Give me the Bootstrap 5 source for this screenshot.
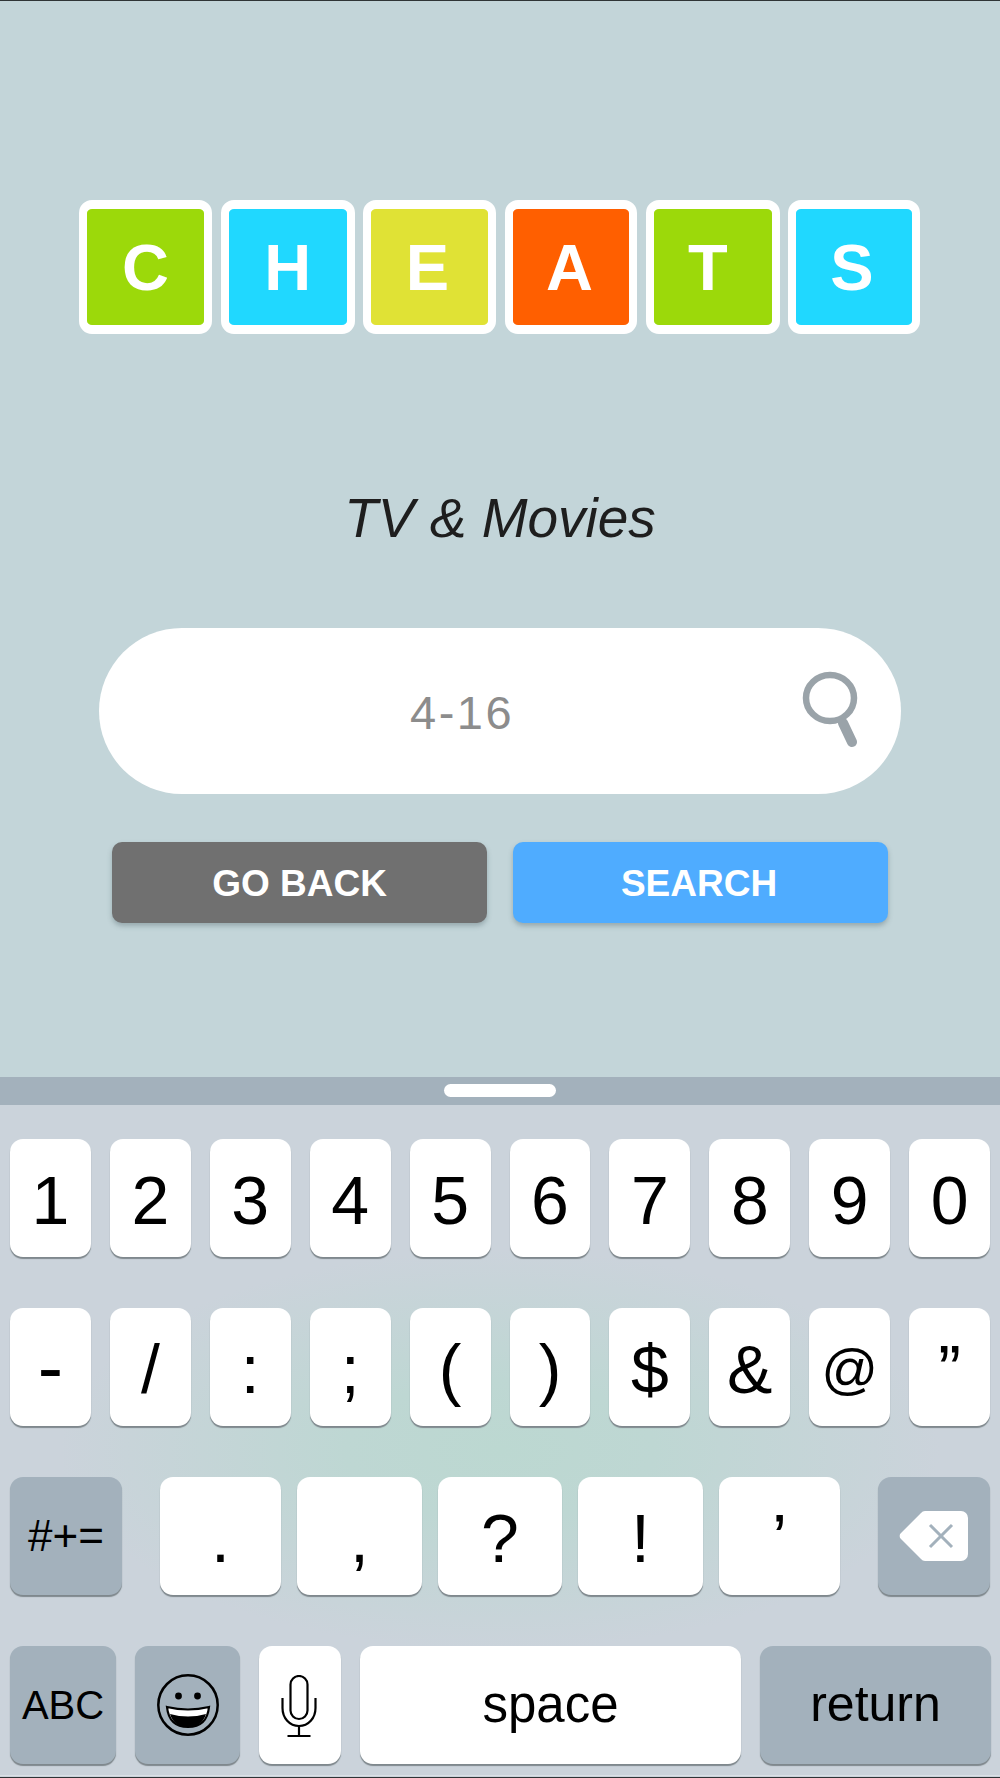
<!DOCTYPE html>
<html lang="en">
<head>
  <meta charset="UTF-8">
  <meta name="viewport" content="width=device-width, initial-scale=1.0">
  <title>Cheats</title>
  <link href="https://cdn.jsdelivr.net/npm/bootstrap@5.3.0/dist/css/bootstrap.min.css" rel="stylesheet">
  <style>
    body {
      width: 1000px;
      height: 1778px;
      overflow: hidden;
      font-family: "Liberation Sans", Arial, sans-serif;
      background: #c3d5d9;
    }
    .screen-top {
      height: 1077px;
      padding-top: 199px;
      border-top: 1px solid #2f3436;
    }
    /* logo */
    .logo-row { gap: 8.7px; padding-left: 79px; }
    .logo-tile {
      width: 133px;
      height: 134px;
      border-style: solid;
      border-color: #fff;
      border-width: 9px 8px;
      border-radius: 13px;
      color: #fff;
      font-size: 65px;
      font-weight: 700;
      line-height: 1;
    }
    .tile-wide { width: 134px; }
    .tile-thin { width: 132px; }
    .tile-green { background: #9cd90a; }
    .tile-blue { background: #20d8ff; }
    .tile-yellow { background: #e0e235; }
    .tile-orange { background: #ff5f00; }
    .nudge-3 { padding-right: 3px; }
    .nudge-5 { padding-right: 5px; }
    .nudge-10 { padding-right: 10px; }

    .cat-title {
      margin: 152px 0 0;
      height: 142px;
      color: #1e1e1e;
      font-size: 55px;
      font-style: italic;
      line-height: 65px;
    }
    /* search */
    .search-pill {
      width: 802px;
      height: 166px;
      margin-left: 99px;
      padding-left: 311px;
      padding-right: 40px;
      border-radius: 83px;
    }
    .search-text { color: #8c8c8c; font-size: 47px; letter-spacing: 2.5px; padding-top: 4px; }
    .search-pill svg { margin-top: -4px; }
    .btn-row { gap: 26px; margin-top: 48px; padding-left: 112px; }
    .act-btn {
      width: 375px;
      height: 81px;
      border: 0;
      border-radius: 10px;
      padding: 2px 0 0;
      color: #fff;
      font-size: 37px;
      font-weight: 700;
      box-shadow: 0 3px 5px rgba(70, 90, 95, .35);
    }
    .act-back, .act-back:hover { background: #707070; color: #fff; }
    .act-search, .act-search:hover { background: #4facff; color: #fff; padding-right: 3px; }

    /* keyboard */
    .kb-bar { height: 28px; padding-top: 7px; background: #a3b1bc; }
    .kb-handle { width: 112px; height: 13px; border-radius: 7px; }
    .kb {
      height: 672px;
      padding: 34px 10px 0;
      gap: 51px;
      background: radial-gradient(ellipse 440px 200px at 500px 345px, #bcd8d1 0%, #bed7d3 35%, #cbd3db 100%);
    }
    .kb-row { height: 118px; gap: 19px; }
    .kb-key {
      height: 118px;
      flex: 0 0 auto;
      padding-top: 3px;
      background: #fff;
      border-radius: 13px;
      box-shadow: 0 2px 1px #7f888d;
      color: #000;
      font-size: 68px;
      line-height: 1;
    }
    .kb-num { flex: 1 1 0; }
    .kb-dark { background: #a3b1bc; }
    .kb-dash { font-size: 76px; padding-top: 0; }
    .kb-at { font-size: 56px; }
    .w-sym { width: 112px; margin-right: 19px; font-size: 44px; padding-top: 0; }
    .w-p1 { width: 121px; }
    .w-p2 { width: 125px; margin-left: -3px; }
    .w-p3 { width: 124px; margin-left: -3px; }
    .w-p4 { width: 125px; margin-left: -3px; }
    .w-p5 { width: 121px; margin-left: -3px; }
    .w-del { width: 112px; margin-left: 19px; padding-top: 0; }
    .w-abc { width: 106px; font-size: 40px; padding-top: 0; }
    .w-emoji { width: 105px; padding-top: 0; }
    .w-mic { width: 82px; padding: 2px 3px 0 0; }
    .w-space { width: 381px; font-size: 51px; padding: 0 0 2px; }
    .w-return { width: 231px; font-size: 50px; padding: 0 0 2px; }
    .kb-end { height: 1px; background: #2f3436; box-shadow: 0 -2px 0 #dbe1e6; }
  </style>
</head>
<body class="position-relative">
<div class="screen-top">
  <div class="d-flex logo-row">
    <div class="logo-tile tile-green d-flex align-items-center justify-content-center">C</div>
    <div class="logo-tile tile-wide tile-blue d-flex align-items-center justify-content-center">H</div>
    <div class="logo-tile tile-yellow nudge-5 d-flex align-items-center justify-content-center">E</div>
    <div class="logo-tile tile-thin tile-orange nudge-3 d-flex align-items-center justify-content-center">A</div>
    <div class="logo-tile tile-wide tile-green nudge-10 d-flex align-items-center justify-content-center">T</div>
    <div class="logo-tile tile-thin tile-blue nudge-5 d-flex align-items-center justify-content-center">S</div>
  </div>

  <h1 class="cat-title text-center fw-normal">TV &amp; Movies</h1>

  <div class="search-pill bg-white d-flex align-items-center justify-content-between">
    <span class="search-text">4-16</span>
    <svg width="60" height="78" viewBox="0 0 60 78" fill="none" stroke="#9aa3a9">
      <ellipse cx="29" cy="28" rx="24" ry="23" stroke-width="6.5"/>
      <path d="M42 53L51 72" stroke-width="10" stroke-linecap="round"/>
    </svg>
  </div>

  <div class="d-flex btn-row">
    <button class="btn act-btn act-back d-flex align-items-center justify-content-center" type="button">GO BACK</button>
    <button class="btn act-btn act-search d-flex align-items-center justify-content-center" type="button">SEARCH</button>
  </div>
</div>

<div class="kb-bar d-flex justify-content-center">
  <div class="kb-handle bg-white"></div>
</div>
<div class="kb d-flex flex-column">
  <div class="kb-row d-flex">
    <div class="kb-key kb-num d-flex align-items-center justify-content-center">1</div>
    <div class="kb-key kb-num d-flex align-items-center justify-content-center">2</div>
    <div class="kb-key kb-num d-flex align-items-center justify-content-center">3</div>
    <div class="kb-key kb-num d-flex align-items-center justify-content-center">4</div>
    <div class="kb-key kb-num d-flex align-items-center justify-content-center">5</div>
    <div class="kb-key kb-num d-flex align-items-center justify-content-center">6</div>
    <div class="kb-key kb-num d-flex align-items-center justify-content-center">7</div>
    <div class="kb-key kb-num d-flex align-items-center justify-content-center">8</div>
    <div class="kb-key kb-num d-flex align-items-center justify-content-center">9</div>
    <div class="kb-key kb-num d-flex align-items-center justify-content-center">0</div>
  </div>
  <div class="kb-row d-flex">
    <div class="kb-key kb-num kb-dash d-flex align-items-center justify-content-center">-</div>
    <div class="kb-key kb-num d-flex align-items-center justify-content-center">/</div>
    <div class="kb-key kb-num d-flex align-items-center justify-content-center">:</div>
    <div class="kb-key kb-num d-flex align-items-center justify-content-center">;</div>
    <div class="kb-key kb-num d-flex align-items-center justify-content-center">(</div>
    <div class="kb-key kb-num d-flex align-items-center justify-content-center">)</div>
    <div class="kb-key kb-num d-flex align-items-center justify-content-center">$</div>
    <div class="kb-key kb-num d-flex align-items-center justify-content-center">&amp;</div>
    <div class="kb-key kb-num kb-at d-flex align-items-center justify-content-center">@</div>
    <div class="kb-key kb-num d-flex align-items-center justify-content-center">”</div>
  </div>
  <div class="kb-row d-flex">
    <div class="kb-key kb-dark w-sym d-flex align-items-center justify-content-center">#+=</div>
    <div class="kb-key w-p1 d-flex align-items-center justify-content-center">.</div>
    <div class="kb-key w-p2 d-flex align-items-center justify-content-center">,</div>
    <div class="kb-key w-p3 d-flex align-items-center justify-content-center">?</div>
    <div class="kb-key w-p4 d-flex align-items-center justify-content-center">!</div>
    <div class="kb-key w-p5 d-flex align-items-center justify-content-center">’</div>
    <div class="kb-key kb-dark w-del d-flex align-items-center justify-content-center">
      <svg width="70" height="50" viewBox="0 0 70 50">
        <path fill="#fff" d="M26 0H62a7 7 0 0 1 7 7V43a7 7 0 0 1-7 7H26a5 5 0 0 1-4-2L2 28a4 4 0 0 1 0-6L22 2a5 5 0 0 1 4-2Z"/>
        <path fill="none" stroke="#a3b1bc" stroke-width="3" d="M31 14L53 36M53 14L31 36"/>
      </svg>
    </div>
  </div>
  <div class="kb-row d-flex">
    <div class="kb-key kb-dark w-abc d-flex align-items-center justify-content-center">ABC</div>
    <div class="kb-key kb-dark w-emoji d-flex align-items-center justify-content-center">
      <svg width="66" height="66" viewBox="0 0 66 66">
        <circle cx="33" cy="33" r="29.7" fill="none" stroke="#000" stroke-width="2.5"/>
        <circle cx="23.5" cy="24" r="3.4"/>
        <circle cx="42.5" cy="24" r="3.4"/>
        <path fill="#fff" stroke="#000" stroke-width="2.2" d="M12 35Q33 40 54 35Q52 55 33 55Q14 55 12 35Z"/>
        <path d="M15 42Q33 47 51 42Q47 55 33 55Q19 55 15 42Z"/>
      </svg>
    </div>
    <div class="kb-key w-mic d-flex align-items-center justify-content-center">
      <svg width="36" height="62" viewBox="0 0 36 62" fill="none" stroke="#000" stroke-width="2.2">
        <rect x="9.5" y="1" width="17" height="43" rx="8.5"/>
        <path d="M1.5 23V33C1.5 43 8.5 51 18 51S34.5 43 34.5 33V23"/>
        <path d="M18 51V61M6.5 61H29.5"/>
      </svg>
    </div>
    <div class="kb-key w-space d-flex align-items-center justify-content-center">space</div>
    <div class="kb-key kb-dark w-return d-flex align-items-center justify-content-center">return</div>
  </div>
</div>
<div class="kb-end position-absolute bottom-0 start-0 end-0"></div>
<script src="https://cdn.jsdelivr.net/npm/bootstrap@5.3.0/dist/js/bootstrap.bundle.min.js"></script>
</body>
</html>
